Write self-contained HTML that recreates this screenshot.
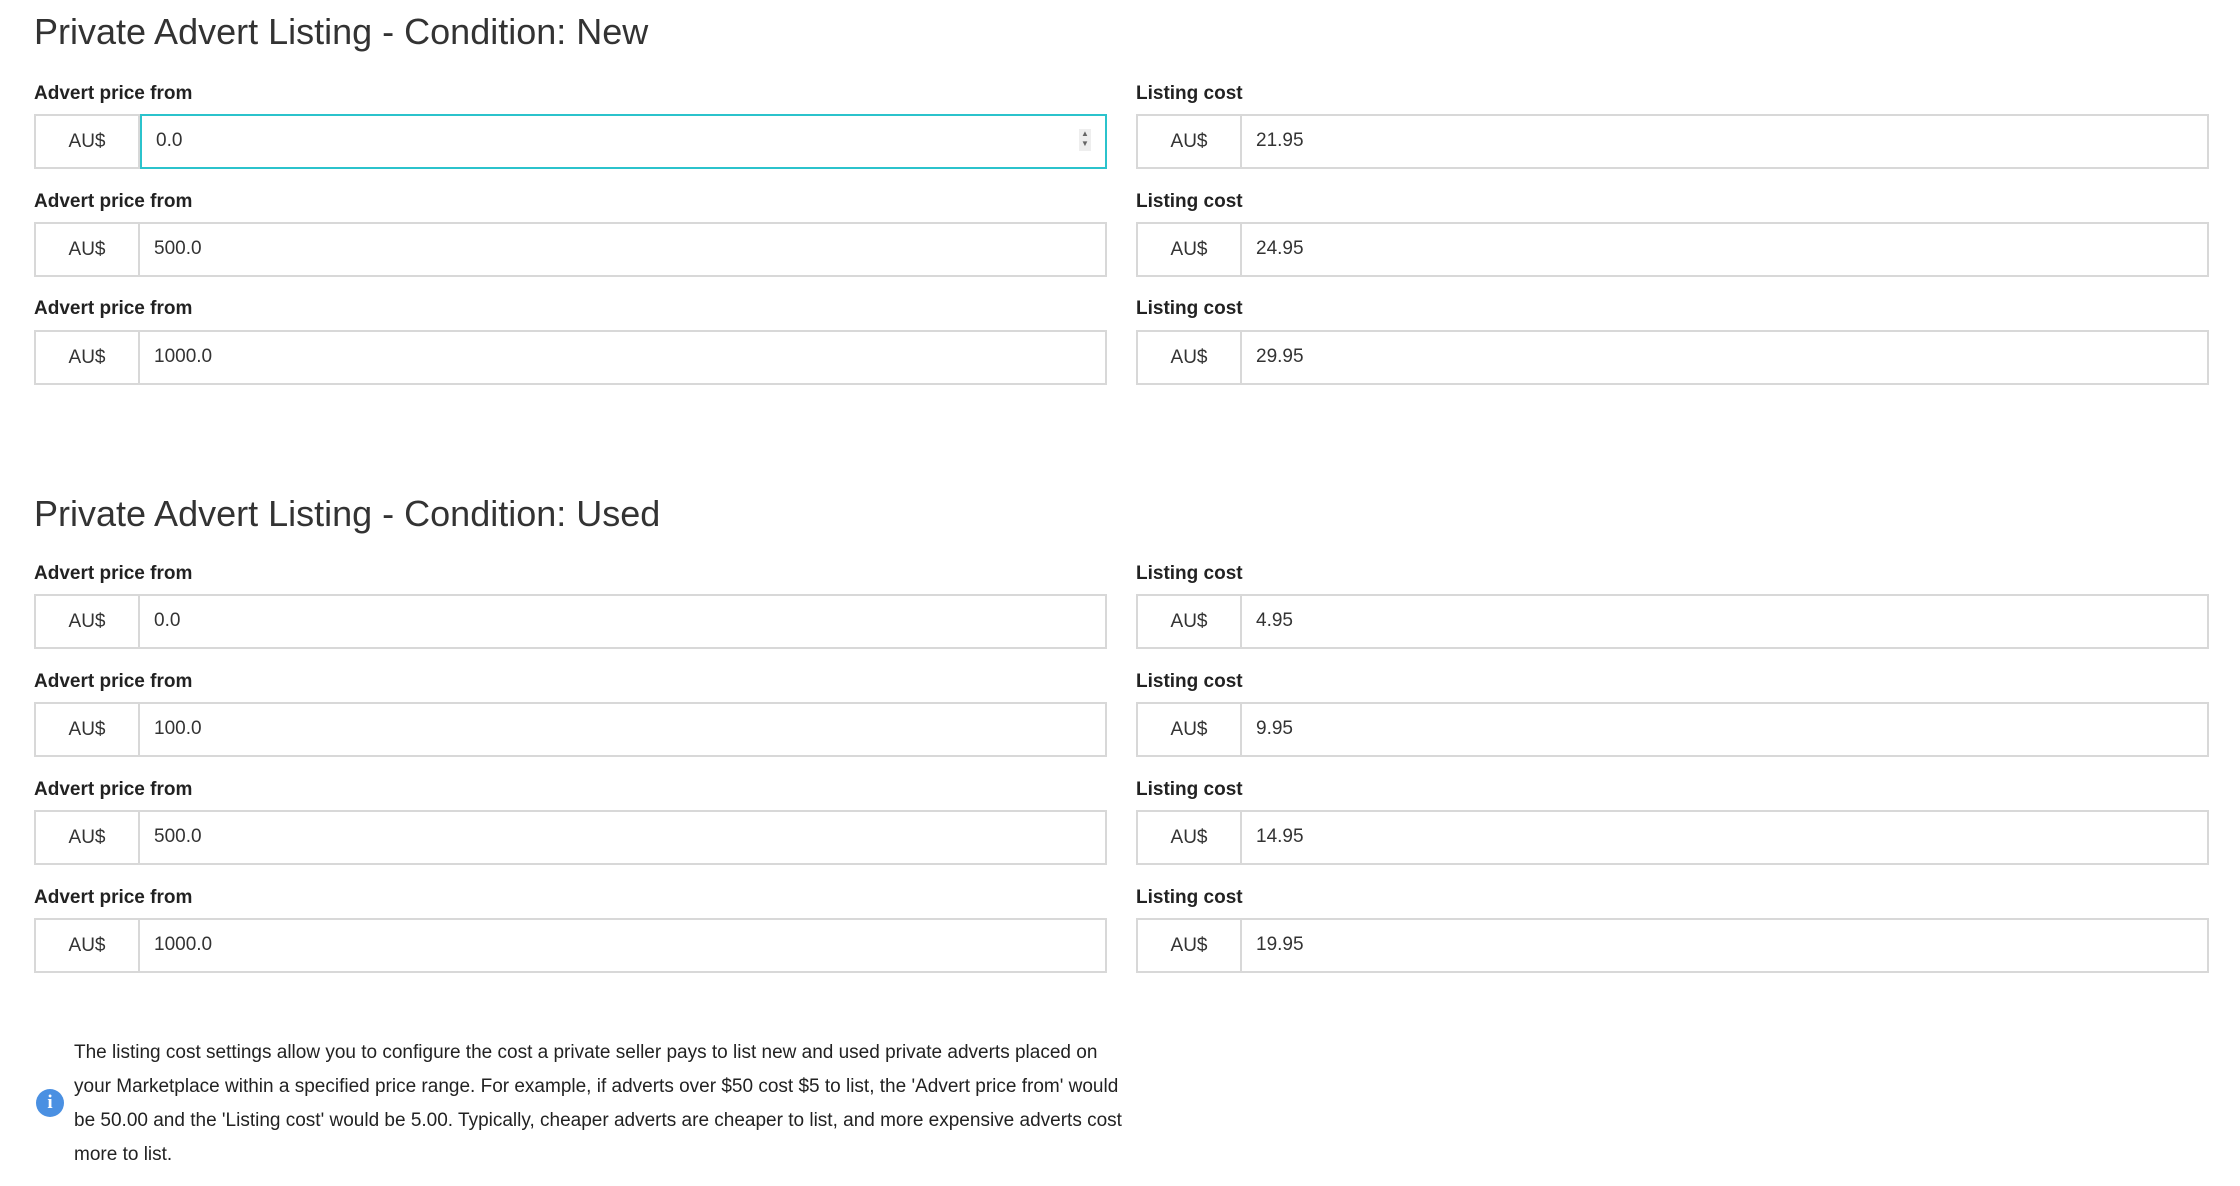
<!DOCTYPE html>
<html><head><meta charset="utf-8"><style>
*{box-sizing:border-box;margin:0;padding:0}
body{width:2240px;height:1186px;background:#fff;font-family:"Liberation Sans",sans-serif;color:#333;position:relative;overflow:hidden}
h2{position:absolute;left:34px;font-weight:normal;font-size:36px;color:#333;white-space:nowrap}
.l{position:absolute;font-weight:bold;font-size:19px;color:#222}
.b{position:absolute;height:55px;width:1073px;border:2px solid #d8d8d8;display:flex;font-size:19px}
.a{width:104px;border-right:2px solid #d8d8d8;display:flex;align-items:center;justify-content:center;color:#333}
.v{padding-left:14px;display:flex;align-items:center;flex:1;color:#333;padding-bottom:2px}
.f{border-color:#d8d8d8}
.f .v{border:2px solid #2bc3cc;margin:-2px -2px -2px 0;position:relative}
.sp{position:absolute;right:14px;top:13px;width:12px;height:22px;background:#eee;font-size:8px;line-height:10px;text-align:center;color:#666}
.info{position:absolute;left:74px;top:1036px;width:1060px;font-size:19px;line-height:34px;color:#222}
.ic{position:absolute;left:36px;top:1089px;width:28px;height:28px;border-radius:50%;background:#4a90e2;color:#fff;font-weight:bold;font-size:19px;text-align:center;line-height:28px;font-family:"Liberation Serif",serif}
</style></head><body>
<h2 style="top:11px">Private Advert Listing - Condition: New</h2>
<h2 style="top:493px">Private Advert Listing - Condition: Used</h2>

<div class="l" style="left:34px;top:83px">Advert price from</div>
<div class="l" style="left:1136px;top:83px">Listing cost</div>
<div class="b f" style="left:34px;top:114px"><div class="a">AU$</div><div class="v">0.0<div class="sp">▲<br>▼</div></div></div>
<div class="b" style="left:1136px;top:114px"><div class="a">AU$</div><div class="v">21.95</div></div>

<div class="l" style="left:34px;top:191px">Advert price from</div>
<div class="l" style="left:1136px;top:191px">Listing cost</div>
<div class="b" style="left:34px;top:222px"><div class="a">AU$</div><div class="v">500.0</div></div>
<div class="b" style="left:1136px;top:222px"><div class="a">AU$</div><div class="v">24.95</div></div>

<div class="l" style="left:34px;top:298px">Advert price from</div>
<div class="l" style="left:1136px;top:298px">Listing cost</div>
<div class="b" style="left:34px;top:330px"><div class="a">AU$</div><div class="v">1000.0</div></div>
<div class="b" style="left:1136px;top:330px"><div class="a">AU$</div><div class="v">29.95</div></div>

<div class="l" style="left:34px;top:563px">Advert price from</div>
<div class="l" style="left:1136px;top:563px">Listing cost</div>
<div class="b" style="left:34px;top:594px"><div class="a">AU$</div><div class="v">0.0</div></div>
<div class="b" style="left:1136px;top:594px"><div class="a">AU$</div><div class="v">4.95</div></div>

<div class="l" style="left:34px;top:671px">Advert price from</div>
<div class="l" style="left:1136px;top:671px">Listing cost</div>
<div class="b" style="left:34px;top:702px"><div class="a">AU$</div><div class="v">100.0</div></div>
<div class="b" style="left:1136px;top:702px"><div class="a">AU$</div><div class="v">9.95</div></div>

<div class="l" style="left:34px;top:779px">Advert price from</div>
<div class="l" style="left:1136px;top:779px">Listing cost</div>
<div class="b" style="left:34px;top:810px"><div class="a">AU$</div><div class="v">500.0</div></div>
<div class="b" style="left:1136px;top:810px"><div class="a">AU$</div><div class="v">14.95</div></div>

<div class="l" style="left:34px;top:887px">Advert price from</div>
<div class="l" style="left:1136px;top:887px">Listing cost</div>
<div class="b" style="left:34px;top:918px"><div class="a">AU$</div><div class="v">1000.0</div></div>
<div class="b" style="left:1136px;top:918px"><div class="a">AU$</div><div class="v">19.95</div></div>

<div class="ic">i</div>
<div class="info">The listing cost settings allow you to configure the cost a private seller pays to list new and used private adverts placed on your Marketplace within a specified price range. For example, if adverts over $50 cost $5 to list, the 'Advert price from' would be 50.00 and the 'Listing cost' would be 5.00. Typically, cheaper adverts are cheaper to list, and more expensive adverts cost more to list.</div>
</body></html>
